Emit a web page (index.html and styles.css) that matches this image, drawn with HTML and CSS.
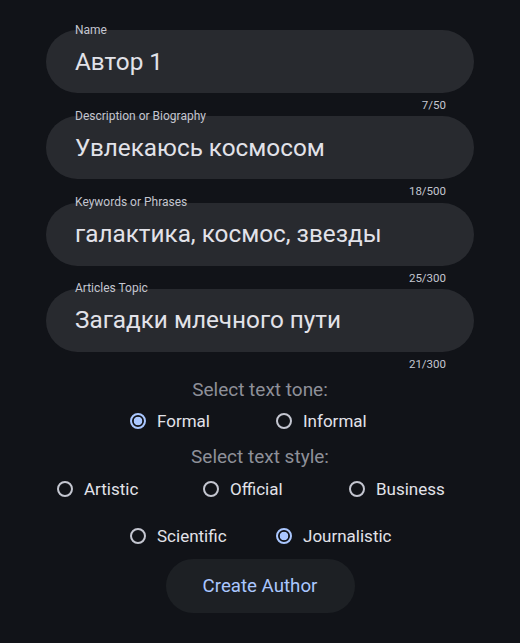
FILE: index.html
```html
<!DOCTYPE html>
<html>
<head>
<meta charset="utf-8">
<link rel="stylesheet" href="styles.css">
</head>
<body>
<div class="page">
  <div class="field">
    <div class="box"><span class="label">Name</span><span class="value">Автор 1</span></div>
    <div class="counter">7/50</div>
  </div>
  <div class="field">
    <div class="box"><span class="label">Description or Biography</span><span class="value">Увлекаюсь космосом</span></div>
    <div class="counter">18/500</div>
  </div>
  <div class="field">
    <div class="box"><span class="label">Keywords or Phrases</span><span class="value">галактика, космос, звезды</span></div>
    <div class="counter">25/300</div>
  </div>
  <div class="field">
    <div class="box"><span class="label">Articles Topic</span><span class="value">Загадки млечного пути</span></div>
    <div class="counter">21/300</div>
  </div>

  <div class="heading tone-heading">Select text tone:</div>
  <div class="row row-tone">
    <div class="radio"><span class="dot checked"></span><span class="rtext">Formal</span></div>
    <div class="radio"><span class="dot"></span><span class="rtext">Informal</span></div>
  </div>

  <div class="heading style-heading">Select text style:</div>
  <div class="row row-style1">
    <div class="radio"><span class="dot"></span><span class="rtext">Artistic</span></div>
    <div class="radio"><span class="dot"></span><span class="rtext">Official</span></div>
    <div class="radio"><span class="dot"></span><span class="rtext">Business</span></div>
  </div>
  <div class="row row-style2">
    <div class="radio"><span class="dot"></span><span class="rtext">Scientific</span></div>
    <div class="radio"><span class="dot checked"></span><span class="rtext">Journalistic</span></div>
  </div>

  <div class="actions"><button class="btn">Create Author</button></div>
</div>
</body>
</html>
```

FILE: styles.css
```css
html, body {
  margin: 0;
  padding: 0;
  background: #111318;
  font-family: Roboto, "Noto Sans", sans-serif;
  color: #e2e2e9;
}
.page {
  width: 520px;
  height: 643px;
  padding-top: 30px;
  box-sizing: border-box;
  display: flex;
  flex-direction: column;
  align-items: center;
}
.field {
  width: 428px;
  display: flex;
  flex-direction: column;
  margin-bottom: 4.3px;
}
.box {
  position: relative;
  height: 63px;
  border-radius: 32px;
  background: #282a2f;
  display: flex;
  align-items: center;
  padding-left: 29px;
  box-sizing: border-box;
}
.label {
  position: absolute;
  left: 29px;
  top: -7.5px;
  font-size: 12px;
  line-height: 14px;
  color: #c4c6d0;
}
.value {
  font-size: 24.3px;
  line-height: 28px;
  color: #e2e2e9;
}
.counter {
  align-self: flex-end;
  margin-right: 28px;
  margin-top: 5px;
  font-size: 11.5px;
  line-height: 14px;
  color: #c4c6d0;
}
.heading {
  font-size: 19px;
  line-height: 22px;
  color: #8e9099;
  text-align: center;
}
.tone-heading { margin-top: 4px; }
.style-heading { margin-top: 5px; }
.row {
  display: flex;
  justify-content: center;
  gap: 8px;
}
.row-tone { margin-top: 0; }
.row-style1 { margin-top: 1px; }
.row-style2 { margin-top: 7px; }
.radio {
  width: 138px;
  height: 40px;
  display: flex;
  align-items: center;
}
.dot {
  width: 40px;
  height: 40px;
  display: flex;
  align-items: center;
  justify-content: center;
  flex: none;
}
.dot::before {
  content: "";
  width: 16px;
  height: 16px;
  box-sizing: border-box;
  border-radius: 50%;
  border: 2px solid #c4c6d0;
}
.dot.checked::before {
  border-color: #aac7ff;
  background: radial-gradient(circle, #aac7ff 0 4px, transparent 4.6px);
}
.rtext {
  font-size: 17px;
  line-height: 20px;
  color: #e2e2e9;
  margin-left: -1px;
}
.actions {
  margin-top: 3px;
}
.btn {
  width: 189px;
  height: 54px;
  border: none;
  border-radius: 27px;
  background: #1d2024;
  color: #aac7ff;
  font-family: Roboto, "Noto Sans", sans-serif;
  font-size: 18.7px;
  padding: 0;
}
```
